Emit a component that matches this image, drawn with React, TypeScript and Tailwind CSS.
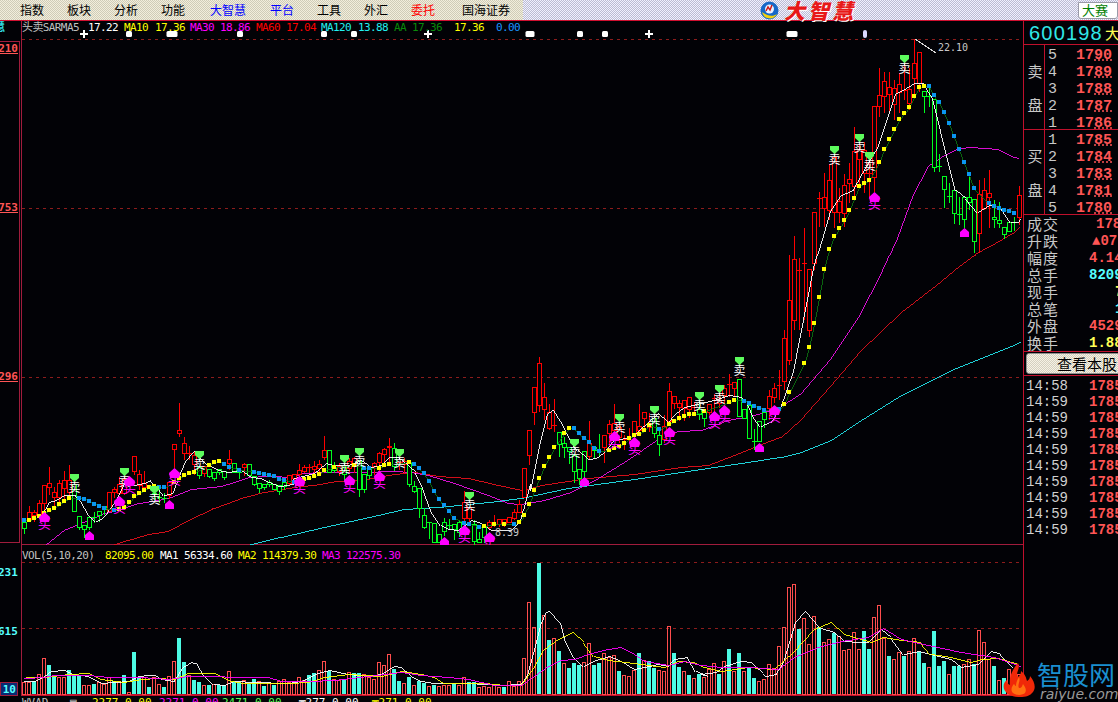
const mono = { fontFamily: '"DejaVu Sans Mono", monospace' }
const cjk = '"Noto Sans CJK SC", sans-serif'

type Row = [number, number, number, number, number, 'r' | 'g']
type Group = { ox: number; oy: number; rows: Row[] }
type P = [number, number]

// candles, read off crops at 3x: [x, wickTop, boxTop, boxBottom, wickBottom, colour]
const groups: Group[] = [
  {
    ox: 0,
    oy: 400,
    rows: [
      [72, 365, 365, 383, 402, 'g'], [87, 318, 337, 360, 365, 'r'], [102, 330, 336, 345, 365, 'r'], [117, 300, 310, 345, 350, 'r'],
      [132, 256, 256, 310, 340, 'r'], [147, 202, 250, 260, 285, 'r'], [162, 262, 277, 292, 320, 'r'], [177, 240, 250, 290, 315, 'r'],
      [192, 213, 241, 265, 300, 'r'], [207, 195, 240, 275, 300, 'r'], [222, 252, 252, 332, 332, 'g'], [237, 347, 347, 380, 390, 'g'],
      [252, 376, 376, 388, 415, 'g'], [267, 352, 352, 380, 390, 'g'], [282, 335, 350, 350, 368, 'g'], [297, 334, 334, 346, 365, 'g'],
      [312, 318, 318, 328, 345, 'g'], [327, 277, 277, 332, 332, 'r'], [342, 260, 268, 275, 295, 'r'], [357, 232, 252, 278, 285, 'r'],
      [372, 230, 238, 278, 285, 'r'], [402, 168, 168, 212, 226, 'r'], [417, 210, 222, 256, 270, 'r'], [432, 213, 250, 262, 272, 'r'],
      [462, 265, 280, 283, 300, 'g'], [477, 265, 290, 290, 310, 'g'], [492, 280, 295, 295, 310, 'g'], [507, 245, 245, 285, 297, 'r'],
      [522, 133, 133, 146, 205, 'r'], [537, 10, 91, 98, 110, 'r'], [552, 112, 130, 158, 180, 'r'], [567, 138, 160, 160, 180, 'r'],
      [582, 152, 165, 193, 225, 'r'], [597, 200, 200, 225, 236, 'g'], [612, 198, 198, 218, 232, 'r'], [627, 207, 207, 228, 235, 'g'],
      [642, 215, 215, 235, 243, 'g'], [657, 206, 206, 215, 225, 'g'], [672, 213, 213, 231, 240, 'g'], [687, 150, 176, 188, 210, 'r'],
      [702, 190, 190, 215, 215, 'g'], [717, 205, 215, 215, 238, 'g'], [732, 188, 193, 202, 228, 'r'], [747, 193, 193, 225, 225, 'g'],
      [762, 229, 229, 252, 258, 'g'], [777, 250, 250, 265, 280, 'g'], [792, 253, 253, 260, 270, 'g'], [807, 240, 245, 252, 260, 'g'],
      [822, 252, 252, 268, 268, 'g'], [837, 256, 256, 274, 285, 'g'], [852, 235, 245, 258, 270, 'g'], [867, 225, 225, 250, 255, 'r'],
      [882, 222, 222, 235, 240, 'r'], [897, 192, 210, 222, 230, 'r'],
    ],
  },
  {
    ox: 280,
    oy: 350,
    rows: [
      [72, 345, 352, 362, 370, 'r'], [87, 343, 352, 352, 368, 'r'], [102, 332, 347, 357, 380, 'r'], [117, 330, 343, 353, 375, 'r'],
      [132, 258, 300, 320, 330, 'r'], [147, 300, 300, 367, 367, 'g'], [162, 335, 350, 360, 370, 'g'], [177, 340, 349, 362, 378, 'r'],
      [192, 340, 350, 372, 395, 'g'], [207, 325, 332, 355, 365, 'r'], [222, 320, 325, 345, 370, 'r'], [237, 330, 330, 418, 442, 'g'],
      [252, 372, 372, 416, 430, 'g'], [267, 352, 352, 375, 388, 'g'], [282, 335, 340, 348, 375, 'r'], [297, 305, 310, 335, 362, 'r'],
      [312, 295, 297, 312, 345, 'r'], [327, 265, 287, 290, 340, 'r'], [342, 280, 295, 348, 362, 'g'], [357, 335, 335, 340, 360, 'r'],
      [372, 325, 332, 342, 370, 'r'], [387, 340, 340, 403, 412, 'g'], [402, 392, 408, 422, 428, 'g'], [417, 415, 415, 475, 505, 'g'],
      [432, 475, 496, 530, 537, 'g'], [447, 515, 517, 517, 568, 'g'], [462, 520, 520, 575, 580, 'g'], [477, 552, 552, 575, 580, 'g'],
      [492, 505, 517, 542, 557, 'g'], [507, 507, 525, 525, 540, 'g'], [522, 523, 523, 537, 570, 'g'], [537, 510, 515, 547, 560, 'g'],
      [552, 423, 455, 505, 520, 'r'], [567, 472, 472, 505, 520, 'r'], [582, 510, 522, 572, 585, 'g'], [597, 545, 568, 577, 580, 'g'],
      [612, 525, 532, 560, 580, 'g'], [627, 510, 515, 530, 540, 'r'], [642, 495, 522, 522, 530, 'r'], [657, 508, 508, 522, 530, 'r'],
      [672, 508, 508, 520, 530, 'r'], [687, 500, 500, 515, 520, 'r'], [702, 478, 485, 505, 510, 'r'], [717, 450, 462, 485, 490, 'r'],
    ],
  },
  {
    ox: 520,
    oy: 350,
    rows: [
      [12, 355, 355, 440, 440, 'r'], [27, 241, 241, 316, 345, 'r'], [42, 112, 112, 185, 225, 'r'], [57, 22, 40, 165, 185, 'r'],
      [72, 100, 142, 178, 210, 'r'], [87, 163, 187, 233, 240, 'r'], [102, 148, 225, 225, 245, 'r'], [117, 247, 247, 282, 322, 'g'],
      [132, 262, 280, 290, 325, 'g'], [147, 290, 290, 303, 342, 'g'], [162, 316, 316, 362, 400, 'g'], [177, 358, 358, 383, 405, 'g'],
      [192, 304, 304, 362, 395, 'g'], [207, 213, 280, 317, 330, 'r'], [222, 292, 292, 300, 325, 'g'], [237, 252, 303, 303, 322, 'g'],
      [252, 256, 256, 292, 340, 'r'], [267, 210, 223, 250, 290, 'r'], [282, 163, 220, 240, 270, 'r'], [297, 225, 230, 262, 280, 'r'],
      [312, 255, 268, 268, 300, 'r'], [327, 235, 260, 260, 280, 'r'], [342, 213, 213, 255, 262, 'r'], [357, 163, 229, 240, 255, 'r'],
      [372, 187, 187, 205, 235, 'r'], [387, 190, 218, 232, 245, 'r'], [402, 205, 205, 250, 265, 'g'], [417, 230, 256, 283, 318, 'g'],
      [432, 195, 228, 268, 280, 'r'], [447, 100, 123, 212, 225, 'r'], [462, 138, 138, 158, 178, 'r'], [477, 150, 160, 170, 212, 'r'],
      [492, 150, 150, 175, 212, 'r'], [507, 142, 142, 177, 205, 'r'], [522, 155, 170, 170, 195, 'r'], [537, 135, 178, 193, 210, 'g'],
      [552, 187, 187, 203, 232, 'g'], [567, 163, 163, 187, 195, 'r'], [582, 132, 145, 145, 185, 'r'], [597, 110, 150, 160, 175, 'r'],
      [612, 105, 115, 135, 190, 'r'], [627, 72, 103, 103, 140, 'r'], [642, 96, 96, 113, 140, 'r'], [657, 88, 88, 197, 197, 'g'],
      [672, 178, 178, 203, 203, 'g'], [687, 165, 165, 263, 263, 'g'], [702, 237, 273, 273, 300, 'g'], [717, 213, 213, 272, 275, 'g'],
      [732, 187, 187, 206, 235, 'g'], [747, 120, 138, 175, 210, 'r'], [762, 100, 115, 140, 160, 'r'], [777, 60, 105, 105, 150, 'r'],
    ],
  },
  {
    ox: 780,
    oy: 30,
    rows: [
      [12, 900, 924, 1053, 1080, 'r'], [27, 675, 810, 990, 1005, 'r'], [42, 618, 688, 870, 900, 'r'], [57, 685, 720, 720, 900, 'r'],
      [72, 595, 700, 700, 870, 'r'], [87, 718, 718, 900, 920, 'r'], [102, 545, 545, 700, 720, 'r'], [117, 485, 505, 505, 590, 'r'],
      [132, 430, 502, 533, 590, 'r'], [147, 403, 450, 540, 570, 'r'], [162, 382, 382, 545, 595, 'r'], [177, 475, 513, 545, 580, 'r'],
      [192, 433, 465, 548, 590, 'r'], [207, 400, 447, 460, 520, 'r'], [222, 292, 363, 468, 500, 'r'], [237, 342, 358, 388, 470, 'r'],
      [252, 335, 360, 430, 490, 'r'], [267, 395, 430, 430, 505, 'r'], [282, 228, 228, 440, 485, 'r'], [297, 115, 195, 227, 260, 'r'],
      [312, 125, 153, 197, 250, 'r'], [327, 125, 172, 193, 250, 'r'], [342, 150, 175, 223, 270, 'r'], [357, 130, 163, 185, 248, 'r'],
      [372, 100, 180, 180, 210, 'r'], [387, 115, 178, 220, 240, 'r'], [402, 28, 99, 145, 195, 'r'], [417, 65, 65, 160, 185, 'r'],
      [432, 183, 183, 197, 248, 'g'], [447, 165, 198, 198, 232, 'g'], [462, 207, 207, 410, 425, 'g'], [477, 373, 408, 408, 425, 'g'],
      [492, 438, 438, 476, 533, 'g'], [507, 460, 498, 498, 520, 'g'], [522, 480, 480, 550, 582, 'g'], [537, 500, 553, 553, 585, 'g'],
      [552, 502, 502, 566, 595, 'g'], [567, 440, 502, 515, 540, 'g'], [582, 507, 507, 632, 668, 'g'], [597, 450, 492, 610, 668, 'r'],
      [612, 443, 480, 535, 540, 'r'], [627, 420, 490, 502, 595, 'r'], [642, 510, 562, 568, 595, 'g'], [657, 515, 571, 578, 595, 'g'],
      [672, 592, 592, 613, 626, 'g'], [687, 577, 577, 603, 603, 'g'], [702, 560, 575, 575, 602, 'g'], [717, 468, 495, 562, 585, 'r'],
    ],
  },
]

const scale = (ox: number, oy: number, pts: P[]): P[] => pts.map(([x, y]) => [ox + x / 3, oy + y / 3])
const dots = (ox: number, oy: number, c: 'y' | 'b', list: P[]): [number, number, 'y' | 'b'][] =>
  scale(ox, oy, list).map(([x, y]) => [x, y, c])

// SAR dots, y = yellow, b = blue
const sar = [
  ...dots(0, 400, 'b', [[72, 360]]),
  ...dots(0, 400, 'y', [[87, 360], [102, 355], [117, 347], [132, 338], [147, 329], [162, 323], [177, 311], [192, 303], [207, 293]]),
  ...dots(0, 400, 'b', [[237, 294], [252, 297], [267, 303], [282, 311], [297, 318], [312, 323], [342, 329]]),
  ...dots(0, 400, 'y', [[357, 326], [372, 320], [387, 306], [402, 287], [417, 279], [432, 270], [447, 262], [462, 257]]),
  ...dots(0, 400, 'b', [[477, 261], [492, 261]]),
  ...dots(0, 400, 'y', [[522, 245], [537, 233], [552, 225], [567, 218], [582, 215], [627, 195], [642, 186], [657, 183]]),
  ...dots(0, 400, 'b', [[672, 192], [687, 200], [717, 209], [762, 215], [777, 219], [792, 222], [807, 226], [822, 228], [837, 237], [852, 241], [882, 245]]),
  ...dots(280, 350, 'b', [[42, 396]]),
  ...dots(280, 350, 'y', [[72, 387], [87, 383], [102, 377], [117, 372], [132, 360], [162, 352], [222, 345]]),
  ...dots(280, 350, 'b', [[252, 353], [267, 353]]),
  ...dots(280, 350, 'y', [[297, 353], [312, 345], [327, 342], [387, 337]]),
  ...dots(280, 350, 'b', [[402, 342], [417, 354], [432, 370], [447, 393], [462, 423], [477, 447], [492, 465], [507, 483], [522, 503], [552, 519], [567, 521], [597, 530]]),
  ...dots(280, 350, 'y', [[612, 527], [642, 521], [672, 521]]),
  ...dots(280, 350, 'b', [[702, 521]]),
  ...dots(280, 350, 'y', [[717, 516], [732, 495], [747, 462], [762, 420], [777, 384]]),
  ...dots(520, 350, 'y', [[57, 383], [72, 348], [87, 321], [102, 291], [132, 249], [147, 234]]),
  ...dots(520, 350, 'b', [[162, 234], [177, 249], [192, 264], [207, 276], [222, 294], [237, 303]]),
  ...dots(520, 350, 'y', [[267, 300], [282, 294], [297, 288], [312, 279], [327, 264], [342, 255], [357, 252], [372, 240], [387, 225]]),
  ...dots(520, 350, 'b', [[417, 237]]),
  ...dots(520, 350, 'y', [[447, 222], [462, 213], [477, 204], [492, 198], [507, 192], [522, 192], [552, 183], [627, 156], [642, 150]]),
  ...dots(520, 350, 'b', [[672, 153], [687, 160], [702, 168], [717, 174], [732, 180], [777, 177]]),
  ...dots(520, 350, 'y', [[792, 162], [807, 126]]),
  ...dots(780, 30, 'y', [[72, 1000], [87, 950], [102, 880], [117, 800], [132, 716], [147, 657], [162, 618], [177, 594], [192, 570], [207, 540], [222, 504], [237, 468], [252, 459], [267, 450], [297, 396], [312, 357], [327, 327], [342, 297], [357, 267], [372, 249], [387, 231], [402, 198], [417, 171], [432, 168]]),
  ...dots(780, 30, 'b', [[447, 168], [462, 195], [477, 216], [492, 246], [507, 279], [522, 318], [537, 357], [552, 396], [567, 432], [582, 474], [627, 519], [642, 528], [657, 534], [672, 540], [687, 543], [702, 549]]),
]

const ma5: P[] = [
  ...scale(0, 400, [[130, 340], [145, 305], [165, 300], [190, 285], [225, 285], [240, 300], [260, 340], [285, 362], [300, 358], [320, 335], [350, 290], [375, 240], [400, 255], [430, 250], [450, 240], [470, 260], [490, 285], [515, 280], [535, 230], [555, 180], [580, 152], [600, 170], [625, 195], [650, 210], [680, 215], [720, 210], [750, 230], [780, 235], [805, 245], [835, 258], [860, 255], [890, 245]]),
  ...scale(280, 350, [[40, 385], [100, 370], [135, 340], [160, 345], [200, 345], [240, 330], [270, 350], [300, 345], [325, 320], [350, 320], [380, 345], [405, 365], [425, 410], [450, 480], [480, 525], [500, 538], [530, 540], [570, 510], [600, 520], [630, 540], [690, 540], [720, 510], [750, 400]]),
  ...scale(520, 350, [[30, 420], [60, 270], [80, 190], [100, 178], [125, 220], [150, 270], [170, 300], [200, 328], [225, 325], [250, 305], [280, 270], [330, 260], [380, 215], [410, 190], [440, 215], [465, 190], [490, 170], [540, 160], [580, 150], [625, 135], [660, 140], [680, 160], [700, 200], [720, 228], [750, 215], [780, 170], [800, 110], [820, 60]]),
  ...scale(780, 30, [[100, 710], [125, 625], [150, 540], [180, 495], [215, 480], [245, 425], [270, 385], [290, 350], [320, 260], [345, 190], [375, 175], [400, 160], [430, 160], [455, 200], [480, 300], [505, 400], [525, 480], [555, 505], [590, 545], [625, 525], [660, 530], [690, 575], [710, 575], [720, 565]]),
]
const ma30: P[] = [
  ...scale(0, 400, [[135, 435], [195, 388], [260, 360], [310, 340], [350, 330], [415, 310], [470, 300], [510, 290], [570, 268], [660, 258], [700, 245], [745, 232], [800, 228], [880, 230]]),
  ...scale(280, 350, [[60, 370], [130, 367], [240, 365], [340, 362], [390, 365], [440, 375], [520, 400], [620, 435], [680, 458], [720, 462]]),
  ...scale(520, 350, [[70, 450], [150, 425], [230, 385], [310, 335], [420, 260], [470, 242], [540, 240], [620, 210], [700, 195], [770, 175], [840, 130]]),
  [830, 358], [858, 316],
  ...scale(780, 30, [[305, 720], [350, 620], [400, 490], [445, 405], [490, 375], [535, 355], [570, 352], [610, 355], [650, 358], [690, 378], [715, 384]]),
]
const ma60: P[] = [
  ...scale(0, 400, [[335, 435], [380, 420], [440, 402], [500, 392], [560, 360], [640, 325], [730, 290], [790, 277], [900, 258]]),
  ...scale(280, 350, [[100, 405], [165, 393], [240, 390], [340, 372], [400, 365], [470, 378], [560, 385], [650, 405], [725, 420]]),
  ...scale(520, 350, [[60, 405], [200, 385], [340, 373], [480, 350], [560, 345], [640, 315], [700, 290], [780, 260], [840, 208]]),
  [830, 385], [860, 350], [900, 312], [935, 285],
  ...scale(780, 30, [[520, 720], [570, 680], [620, 650], [700, 605], [718, 590]]),
]
const ma120: P[] = [
  [247, 545], [280, 537], [323, 527], [377, 515], [403, 509], [437, 507], [467, 504], [497, 501], [520, 498], [567, 488], [640, 478], [713, 467], [780, 457], [800, 452], [830, 440], [860, 420], [900, 395], [950, 370], [1000, 350], [1020, 342],
]

const sellMarks: P[] = [[74, 478], [124, 472], [154, 490], [199, 455], [344, 459], [359, 452], [399, 453], [469, 496], [574, 443], [619, 418], [654, 410], [699, 396], [719, 389], [739, 361], [834, 150], [859, 138], [869, 156], [904, 59]]
const buyMarks: P[] = [[44, 518], [119, 502], [129, 482], [174, 474], [299, 482], [349, 481], [379, 477], [464, 531], [489, 538], [614, 437], [634, 443], [669, 433], [714, 417], [724, 411], [774, 411], [874, 198]]
const upMarks: P[] = [[89, 536], [169, 505], [444, 542], [584, 482], [759, 448], [964, 233]]
const topDots: [number, number][] = [[129, 6], [172, 11], [240, 6], [324, 6], [354, 6], [580, 6], [605, 6], [530, 9], [792, 11]]
const topCross = [84, 428, 649]

// volume: signed height, positive = hollow red, negative = filled cyan, one bar every 5px from x=22
const vol = [
  12, 12, -13, 20, 36, -29, -17, 17, 17, -24, -19, -18, 9, 9, -10, 12, 10, 17, -13, 13, -19, 2, -42, -17, 17, -7, 17, 10, -7, 18, 33, -56, -32, 19, -14, -12, 9, -9, 10, -9, -9, 23, -12, -12, 14, -10, -15, 13, -8, 12, -9, 13, 15, 12, 13, 17, 14, -19, -21, 24, 33, -23, 15, 14, -15, 22, -21, -21, 20, 17, 15, 32, 29, 40, -25, -13,
  11, -17, 9, -13, -11, 8, -9, 8, 9, 9, -10, 9, 17, -12, -12, 7, 8, 7, 9, 7, -7, 13, 8, 13, 36, 92, 67, -131, 79, -54, 56, -43, 31, -26, -31, -29, 32, 51, -29, -31, 41, 37, 39, -23, 19, 18, 24, -41, 34, -33, -26, 24, 23, 68, -41, -27, 23, -19, 16, -20, 17, 25, 31, -20,
  33, -45, 23, -41, 23, -26, -16, 13, 15, 30, 26, 48, 67, 107, 110, -65, 76, 50, 78, -67, 52, 55, -61, 58, 44, 45, 62, 45, -63, -45, 77, 89, 56, -38, 35, 42, -38, 43, 56, -42, -31, 27, -63, -28, -33, 20, -28, -28, 30, 35, -30, 64, 52, 35, -28, 14, -16, 25, -12, 20,
]

const volWhite: P[] = [
  ...scale(0, 540, [[70, 425], [100, 425], [130, 410], [150, 397], [190, 393], [215, 405], [260, 412], [300, 433], [340, 430], [385, 425], [410, 410], [440, 408], [462, 408], [480, 420], [520, 425], [545, 385], [570, 370], [590, 375], [610, 405], [640, 435], [670, 438], [700, 425], [760, 430], [860, 433], [900, 425], [950, 402], [985, 393], [1040, 405], [1100, 410], [1140, 405], [1180, 380]]),
  ...scale(400, 555, [[0, 340], [30, 365], [60, 380], [100, 388], [200, 388], [300, 392], [360, 390], [380, 360], [400, 295], [420, 210], [435, 175], [448, 167], [480, 205], [495, 260], [520, 305], [550, 335], [575, 320], [625, 307], [660, 320], [700, 345], [730, 340], [770, 330], [800, 335], [820, 315], [860, 310], [885, 350], [920, 365]]),
  ...scale(700, 555, [[0, 360], [45, 355], [70, 335], [120, 322], [150, 325], [195, 365], [225, 360], [250, 320], [285, 200], [315, 167], [340, 195], [360, 222], [400, 235], [430, 262], [470, 265], [500, 265], [540, 225], [570, 250], [610, 300], [655, 290], [690, 300], [750, 315], [780, 338], [830, 330], [870, 290], [900, 300], [940, 340]]),
]
const volYellow: P[] = [
  ...scale(0, 540, [[75, 415], [130, 415], [200, 405], [260, 403], [300, 420], [370, 428], [420, 420], [470, 418], [520, 420], [560, 402], [640, 403], [690, 425], [730, 433], [860, 433], [920, 428], [970, 415], [1040, 405], [1140, 410]]),
  ...scale(400, 555, [[0, 352], [60, 360], [100, 370], [125, 388], [250, 388], [310, 392], [360, 392], [400, 340], [430, 285], [470, 255], [515, 235], [550, 265], [580, 305], [620, 318], [700, 328], [790, 340], [830, 320], [880, 325]]),
  ...scale(700, 555, [[0, 335], [60, 350], [140, 340], [220, 345], [280, 290], [340, 225], [390, 203], [430, 240], [480, 255], [510, 265], [545, 248], [600, 258], [660, 265], [690, 300], [750, 310], [810, 325], [840, 315], [890, 312], [950, 330]]),
]
const volMagenta: P[] = [
  ...scale(0, 540, [[70, 418], [130, 415], [160, 408], [260, 408], [320, 415], [420, 414], [500, 420], [560, 410], [640, 410], [700, 415], [800, 415], [840, 425], [920, 425], [1000, 422], [1100, 410]]),
  ...scale(400, 555, [[0, 355], [60, 362], [140, 368], [200, 375], [280, 392], [360, 392], [400, 365], [440, 335], [480, 318], [520, 314], [570, 298], [620, 285], [660, 278], [700, 300], [730, 320], [800, 332], [850, 322]]),
  ...scale(700, 555, [[0, 332], [60, 340], [150, 338], [230, 345], [280, 310], [350, 280], [420, 262], [500, 248], [545, 222], [600, 255], [680, 272], [780, 293], [880, 310], [960, 335]]),
]

const pts = (l: P[]) => l.map(([x, y]) => `${Math.round(x) + 0.5},${Math.round(y) + 0.5}`).join(' ')

function Line({ data, color }: { data: P[]; color: string }) {
  return <polyline points={pts(data)} fill="none" stroke={color} strokeWidth={0.9} shapeRendering="crispEdges" />
}

function Candles() {
  return (
    <g shapeRendering="crispEdges">
      {groups.flatMap((g, gi) =>
        g.rows.map((r, i) => {
          const x = Math.round(g.ox + r[0] / 3)
          const color = r[5] === 'r' ? '#ff0000' : '#00ff1e'
          const y = (v: number) => Math.round(g.oy + v / 3)
          const cross = r[2] === r[3]
          return (
            <g key={`${gi}-${i}`}>
              <line x1={x + 0.5} x2={x + 0.5} y1={y(r[1])} y2={y(r[4])} stroke={color} />
              {cross ? (
                <line x1={x - 2} x2={x + 3} y1={y(r[2]) + 0.5} y2={y(r[2]) + 0.5} stroke={color} />
              ) : (
                <rect x={x - 1.5} y={y(r[2]) + 0.5} width={4} height={y(r[3]) - y(r[2])} fill="#020206" stroke={color} />
              )}
            </g>
          )
        }),
      )}
    </g>
  )
}

function Markers() {
  const text = { fontFamily: cjk, textAnchor: 'middle' as const }
  return (
    <g>
      {sellMarks.map(([x, y], i) => (
        <g key={i}>
          <text x={x + 0.5} y={y + 14} fill="#ffffff" style={{ ...text, fontSize: 12 }}>卖</text>
          <polygon points={`${x - 4},${y - 4} ${x + 5},${y - 4} ${x + 5},${y} ${x + 0.5},${y + 4} ${x - 4},${y}`} fill="#5dfc5d" />
        </g>
      ))}
      {buyMarks.map(([x, y], i) => (
        <g key={i}>
          <text x={x + 0.5} y={y + 10} fill="#ff00ff" style={{ ...text, fontSize: 13 }}>买</text>
          <polygon points={`${x + 0.5},${y - 6} ${x + 6},${y - 1} ${x + 5},${y + 4} ${x - 4},${y + 4} ${x - 5},${y - 1}`} fill="#ff00ff" />
        </g>
      ))}
      {upMarks.map(([x, y], i) => (
        <polygon key={i} points={`${x + 0.5},${y - 5} ${x + 5},${y - 1} ${x + 5},${y + 4} ${x - 4},${y + 4} ${x - 4},${y - 1}`} fill="#ff00ff" />
      ))}
    </g>
  )
}

function PriceChart() {
  return (
    <svg className="absolute inset-0" width={1001} height={524} viewBox="22 21 1001 524">
      <g stroke="#8c1c1c" strokeDasharray="3 4" shapeRendering="crispEdges">
        <line x1={22} x2={1023} y1={39.5} y2={39.5} />
        <line x1={22} x2={1023} y1={208.5} y2={208.5} />
        <line x1={22} x2={1023} y1={377.5} y2={377.5} />
      </g>
      <g fill="#ffffff">
        {topDots.map(([x, w], i) => (
          <rect key={i} x={x - w / 2} y={31} width={w} height={6} rx={1.5} />
        ))}
        {topCross.map((x) => (
          <g key={x}>
            <rect x={x - 4} y={33} width={8} height={2} />
            <rect x={x - 1} y={30} width={2} height={8} />
          </g>
        ))}
        <rect x={863} y={30} width={4} height={8} rx={2} fill="#d8d8ff" />
      </g>
      <Line data={ma120} color="#22e8f0" />
      <Line data={ma60} color="#e8101c" />
      <Line data={ma30} color="#f010e8" />
      <Candles />
      <Line data={ma5} color="#ffffff" />
      <polyline points={pts(sar.map(([x, y]) => [x, y]))} fill="none" stroke="#0b6e10" strokeWidth={0.9} shapeRendering="crispEdges" />
      <g shapeRendering="crispEdges">
        {sar.map(([x, y, c], i) => (
          <rect key={i} x={Math.round(x) - 2} y={Math.round(y) - 2} width={4} height={4} fill={c === 'y' ? '#ffff00' : '#0a96f0'} />
        ))}
      </g>
      <Markers />
      <line x1={915} y1={39} x2={936} y2={53} stroke="#d8d8d8" shapeRendering="crispEdges" />
      <text x={938} y={51} fill="#c8c8c8" style={{ ...mono, fontSize: 10 }}>22.10</text>
      <text x={495} y={536} fill="#c8c8c8" style={{ ...mono, fontSize: 10 }}>8.39</text>
    </svg>
  )
}

function VolumeChart() {
  return (
    <svg className="absolute inset-0" width={1001} height={150} viewBox="22 546 1001 150">
      <g stroke="#8c1c1c" strokeDasharray="3 4" shapeRendering="crispEdges">
        <line x1={22} x2={1023} y1={563.5} y2={563.5} />
        <line x1={22} x2={1023} y1={629.5} y2={629.5} />
      </g>
      <g shapeRendering="crispEdges">
        {vol.map((h, i) => {
          const x = 22 + i * 5
          return h > 0 ? (
            <rect key={i} x={x + 0.5} y={695.5 - h} width={3} height={h} fill="none" stroke="#ff4d4d" />
          ) : (
            <rect key={i} x={x} y={695 + h} width={4} height={-h} fill="#4dfbe4" />
          )
        })}
      </g>
      <Line data={volWhite} color="#ffffff" />
      <Line data={volYellow} color="#ffff00" />
      <Line data={volMagenta} color="#ff00ff" />
    </svg>
  )
}

const legend = [
  { t: '头卖SARMA5', c: 'text-[#c0c0c0] w-[66px]' },
  { t: '17.22', c: 'text-white w-[36px]' },
  { t: 'MA10', c: 'text-[#ffff00] w-[31px]' },
  { t: '17.36', c: 'text-[#ffff00] w-[35px]' },
  { t: 'MA30', c: 'text-[#ff00ff] w-[30px]' },
  { t: '18.86', c: 'text-[#ff00ff] w-[36px]' },
  { t: 'MA60', c: 'text-[#ff0000] w-[30px]' },
  { t: '17.04', c: 'text-[#ff0000] w-[35px]' },
  { t: 'MA120', c: 'text-[#22f0f0] w-[37px]' },
  { t: '13.88', c: 'text-[#22f0f0] w-[36px]' },
  { t: 'AA', c: 'text-[#0a8a0a] w-[18px]' },
  { t: '17.36', c: 'text-[#0a8a0a] w-[42px]' },
  { t: '17.36', c: 'text-[#ffff00] w-[42px]' },
  { t: '0.00', c: 'text-[#1a96ff] w-[30px]' },
]
const volLegend = [
  { t: 'VOL(5,10,20)', c: 'text-[#c0c0c0] w-[83px]' },
  { t: '82095.00', c: 'text-[#ffff00] w-[55px]' },
  { t: 'MA1', c: 'text-white w-[24px]' },
  { t: '56334.60', c: 'text-white w-[54px]' },
  { t: 'MA2', c: 'text-[#ffff00] w-[24px]' },
  { t: '114379.30', c: 'text-[#ffff00] w-[60px]' },
  { t: 'MA3', c: 'text-[#ff00ff] w-[24px]' },
  { t: '122575.30', c: 'text-[#ff00ff] w-[60px]' },
]
const menu = [
  { t: '指数', c: 'text-black w-[47px]' },
  { t: '板块', c: 'text-black w-[47px]' },
  { t: '分析', c: 'text-black w-[47px]' },
  { t: '功能', c: 'text-black w-[49px]' },
  { t: '大智慧', c: 'text-[#0000ff] w-[60px]' },
  { t: '平台', c: 'text-[#0000ff] w-[47px]' },
  { t: '工具', c: 'text-black w-[47px]' },
  { t: '外汇', c: 'text-black w-[47px]' },
  { t: '委托', c: 'text-[#ff0000] w-[51px]' },
  { t: '国海证券', c: 'text-black w-[50px]' },
]
const asks = [['5', '1790'], ['4', '1789'], ['3', '1788'], ['2', '1787'], ['1', '1786']]
const bids = [['1', '1785'], ['2', '1784'], ['3', '1783'], ['4', '1781'], ['5', '1780']]
const stats = [
  { l: '成交', v: '178', c: 'text-[#ff5555] ml-[7px]' },
  { l: '升跌', v: '▲07', c: 'text-[#ff5555] ml-[3px]' },
  { l: '幅度', v: '4.14', c: 'text-[#ff5555]' },
  { l: '总手', v: '8209', c: 'text-[#55ffff]' },
  { l: '现手', v: '7', c: 'text-[#ffff55] ml-[26px]' },
  { l: '总笔', v: '1', c: 'text-[#55ffff] ml-[26px]' },
  { l: '外盘', v: '4529', c: 'text-[#ff5555]' },
  { l: '换手', v: '1.88', c: 'text-[#ffff55]' },
]
const ticks = ['14:58', '14:59', '14:59', '14:59', '14:59', '14:59', '14:59', '14:59', '14:59', '14:59']

function Quotes({ side, rows }: { side: string; rows: string[][] }) {
  return (
    <div className="flex h-[85px] border-b border-[#c0102c]">
      <div className="w-[21px] shrink-0 border-r border-[#c0102c] flex flex-col justify-around items-center py-[8px] pl-[2px] text-[15px] leading-none text-[#c8c8c8]" style={{ fontFamily: cjk }}>
        <span>{side}</span>
        <span>盘</span>
      </div>
      <div className="flex flex-col pt-[2px]">
        {rows.map(([n, p]) => (
          <div key={n + p} className="flex h-[17px] shrink-0 items-center whitespace-nowrap text-[15px] font-bold leading-none" style={{ fontFamily: '"Liberation Mono", monospace' }}>
            <span className="w-[31px] pl-[3px] font-normal text-[#c8c8c8]">{n}</span>
            <span className="text-[#ff5555]">
              {p.slice(0, 2)}
              <span className="underline decoration-dotted">{p.slice(2)}</span>
            </span>
          </div>
        ))}
      </div>
    </div>
  )
}

export default function App() {
  return (
    <div className="relative w-[1118px] h-[702px] overflow-hidden flex flex-col bg-[#020206]">
      <header className="flex h-[21px] shrink-0 border-b border-[#d01030]" style={{ fontFamily: cjk }}>
        <nav className="flex w-[532px] items-center pl-[20px] text-[12px] bg-[repeating-conic-gradient(#f2eedc_0_25%,#cfccb8_0_50%)] bg-[length:2px_2px]">
          {menu.map((m) => (
            <span key={m.t} className={m.c}>{m.t}</span>
          ))}
        </nav>
        <div className="flex flex-1 items-center pl-[237px] bg-[repeating-conic-gradient(#f0f0ff_0_25%,#bcbcd2_0_50%)] bg-[length:2px_2px]">
          <svg width={19} height={19} viewBox="0 0 19 19" className="shrink-0">
            <circle cx={9.5} cy={9.5} r={9} fill="#1668c8" />
            <path d="M2 11a8 8 0 0 0 15 2c-4 3-10 2-15-2z" fill="#f2d010" />
            <circle cx={9.5} cy={8} r={4.5} fill="#e8f0ff" />
            <path d="M6 10l2-4 2 3 2-5" fill="none" stroke="#d01818" strokeWidth={1.5} />
          </svg>
          <span className="ml-[5px] w-[72px] shrink-0 text-[21px] font-black italic leading-none tracking-[3px] whitespace-nowrap text-[#e81818] [text-shadow:1px_1px_0_#ffffff]">大智慧</span>
          <span className="ml-[222px] flex h-[17px] w-[40px] shrink-0 items-center rounded-b-[3px] border border-[#9a9aa8] bg-white pl-[3px] text-[13px] whitespace-nowrap text-[#008000]">大赛</span>
        </div>
      </header>

      <main className="flex h-[675px] shrink-0">
        <div className="flex w-[22px] shrink-0 flex-col border-r border-[#a01c3c] text-[11px] font-bold leading-none text-[#ff5555]" style={mono}>
          <div className="h-[20px] overflow-hidden text-[11px] text-[#30d8e0]" style={{ fontFamily: cjk }}>
            <span className="relative -left-[6px]">慧</span>
          </div>
          <div className="flex h-[502px] w-[20px] flex-col items-end border-y border-r border-[#a01c3c] pr-[1px]">
            <span className="mt-[1px] overflow-hidden underline">210</span>
            <span className="mt-[148px] underline">753</span>
            <span className="mt-[158px] underline">296</span>
          </div>
          <div className="flex flex-1 flex-col items-start text-[#55ffff]">
            <span className="mt-[24px] -ml-[2px]">231</span>
            <span className="mt-[48px] -ml-[2px]">615</span>
            <span className="mt-[45px] flex h-[14px] w-[18px] items-center justify-end border border-[#a01c3c] bg-[#0a2a70] pr-[1px]">10</span>
          </div>
        </div>

        <div className="flex w-[1001px] shrink-0 flex-col">
          <section className="relative h-[524px] border-b border-[#a01c3c]">
            <PriceChart />
            <div className="relative flex h-[13px] items-center whitespace-nowrap text-[11px] tracking-[-0.6px] leading-none" style={{ fontFamily: `"DejaVu Sans Mono", ${cjk}` }}>
              {legend.map((l, i) => (
                <span key={i} className={`shrink-0 ${l.c}`}>{l.t}</span>
              ))}
            </div>
          </section>
          <section className="relative flex-1 border-b-2 border-[#c0102c]">
            <VolumeChart />
            <div className="relative flex h-[20px] items-center whitespace-nowrap text-[11px] tracking-[-0.6px] leading-none" style={mono}>
              {volLegend.map((l, i) => (
                <span key={i} className={`shrink-0 ${l.c}`}>{l.t}</span>
              ))}
            </div>
          </section>
        </div>

        <aside className="flex w-[95px] shrink-0 flex-col overflow-hidden border-l border-[#c0102c]" style={{ fontFamily: cjk }}>
          <div className="flex h-[24px] items-center whitespace-nowrap border-b border-[#c0102c] pl-[5px]">
            <span className="text-[20px] leading-none tracking-[1.2px] text-[#30e8e8]" style={{ fontFamily: '"Liberation Sans", sans-serif' }}>600198</span>
            <span className="ml-[2px] text-[15px] leading-none text-[#ffff55]">大</span>
          </div>
          <Quotes side="卖" rows={asks} />
          <Quotes side="买" rows={bids} />
          <div className="flex flex-col border-b border-[#c0102c] pl-[3px]">
            {stats.map((s) => (
              <div key={s.l} className="flex h-[17px] items-center whitespace-nowrap leading-none">
                <span className="w-[62px] shrink-0 text-[15px] tracking-[1px] text-[#c8c8c8]">{s.l}</span>
                <span className={`text-[14px] font-bold ${s.c}`} style={{ fontFamily: '"Liberation Mono", monospace' }}>{s.v}</span>
              </div>
            ))}
          </div>
          <div className="flex h-[24px] items-center border-b border-[#c0102c] pl-[2px]">
            <div className="flex h-[21px] w-[110px] shrink-0 items-center rounded-[3px] border border-[#909090] bg-[repeating-conic-gradient(#f6f2e4_0_25%,#d4d0c0_0_50%)] bg-[length:2px_2px] pl-[30px] text-[15px] leading-none whitespace-nowrap text-black">
              查看本股
            </div>
          </div>
          <div className="flex flex-col pt-[2px]">
            {ticks.map((t, i) => (
              <div key={i} className="flex h-[16px] items-center whitespace-nowrap text-[14px] font-bold leading-none" style={{ fontFamily: '"Liberation Mono", monospace' }}>
                <span className="w-[65px] shrink-0 pl-[2px] font-normal text-[#d0d0d0]">{t}</span>
                <span className="text-[#ff5555]">1785</span>
              </div>
            ))}
          </div>
        </aside>
      </main>

      <footer className="flex h-[6px] overflow-hidden pl-[22px] text-[11px] leading-[14px] whitespace-nowrap" style={mono}>
        <span className="w-[48px] text-[#c0c0c0]">WVAD</span>
        <span className="w-[22px] text-[#c0c0c0]">▤</span>
        <span className="w-[67px] text-[#ffff00]">2277 0.00</span>
        <span className="w-[63px] text-[#ff00ff]">2271 0.00</span>
        <span className="w-[77px] text-[#55ff55]">2471 0.00</span>
        <span className="w-[73px] text-white">▣277 0.00</span>
        <span className="text-[#ffff00]">▣271 0.00</span>
      </footer>

      {/* watermark sits over the corner of the volume pane */}
      <div className="absolute left-[1003px] top-[661px] flex">
        <svg width={33} height={34} viewBox="0 0 33 34" className="mt-[2px]">
          <path d="M15 0c3 6-3 9 0 14 2-2 3-3 3-6 5 4 5 7 6 10 2-1 3-3 3-5 5 6 6 12 3 16-3 4-7 5-13 5-8 0-14-3-16-8-1-4 0-7 3-9 0 3 1 4 3 5-1-6 1-14 8-22z" fill="#f02808" />
          <path d="M16 14c2 4-2 8 0 11 3 0 3-2 4-4 2 3 4 5 2 9-2 2-8 3-12 0-3-3-1-7 1-9 1 1 1 2 2 2 0-3 1-6 3-9z" fill="#ff7010" />
        </svg>
        <div className="flex flex-col items-start pl-[1px]">
          <span className="text-[26px] leading-[26px] whitespace-nowrap text-[#1a8fd0]" style={{ fontFamily: cjk }}>智股网</span>
          <span className="ml-[3px] text-[14px] italic leading-[14px] whitespace-nowrap text-[#9a9a9a]" style={{ fontFamily: '"DejaVu Sans", sans-serif' }}>raiyue.com</span>
        </div>
      </div>
    </div>
  )
}
